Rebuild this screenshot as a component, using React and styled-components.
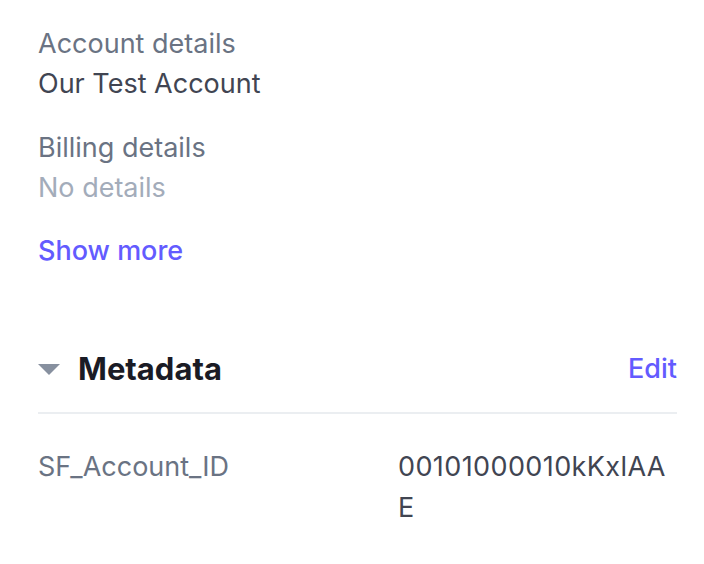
import React from 'react'
import styled, { createGlobalStyle } from 'styled-components'

const Global = createGlobalStyle`
  html, body {
    margin: 0;
    background: #fff;
  }
  body {
    font-family: Inter, "Noto Sans", sans-serif;
    -webkit-font-smoothing: antialiased;
  }
`

const Page = styled.div`
  padding: 24px 27px 0 38px;
  font-size: 27px;
  line-height: 40px;
`

const Details = styled.dl`
  margin: 0;
  display: flex;
  flex-direction: column;
  gap: 24px;
`

const Field = styled.div``

const Label = styled.dt`
  color: #6a7383;
`

const Value = styled.dd`
  margin: 0;
  color: ${(p) => (p.$empty ? '#a3acba' : '#414552')};
`

const LinkButton = styled.button`
  border: 0;
  background: none;
  padding: 0;
  font: inherit;
  font-weight: 500;
  color: #635bff;
  cursor: pointer;
`

const ShowMore = styled(LinkButton)`
  margin-top: 23px;
`

const Section = styled.section`
  margin-top: 78px;
`

const SectionHeader = styled.header`
  display: flex;
  align-items: center;
  justify-content: space-between;
  padding-bottom: 23px;
  border-bottom: 2px solid #ebeef1;
`

const Toggle = styled.div`
  display: flex;
  align-items: center;
  gap: 18px;
`

const Caret = styled.span`
  width: 0;
  height: 0;
  border-left: 11px solid transparent;
  border-right: 11px solid transparent;
  border-top: 11px solid #87909f;
`

const Title = styled.h2`
  margin: 0;
  font-size: 31px;
  font-weight: 700;
  color: #1a1b25;
`

const MetaRow = styled.div`
  display: grid;
  grid-template-columns: 360px 272px;
  margin-top: 32px;
  line-height: 41px;
`

const MetaKey = styled.div`
  color: #6a7383;
`

const MetaValue = styled.div`
  color: #414552;
  letter-spacing: 0.4px;
  word-break: break-all;
`

export default function App() {
  return (
    <Page>
      <Global />
      <Details>
        <Field>
          <Label>Account details</Label>
          <Value>Our Test Account</Value>
        </Field>
        <Field>
          <Label>Billing details</Label>
          <Value $empty>No details</Value>
        </Field>
      </Details>
      <ShowMore>Show more</ShowMore>
      <Section>
        <SectionHeader>
          <Toggle>
            <Caret />
            <Title>Metadata</Title>
          </Toggle>
          <LinkButton>Edit</LinkButton>
        </SectionHeader>
        <MetaRow>
          <MetaKey>SF_Account_ID</MetaKey>
          <MetaValue>00101000010kKxlAAE</MetaValue>
        </MetaRow>
      </Section>
    </Page>
  )
}
